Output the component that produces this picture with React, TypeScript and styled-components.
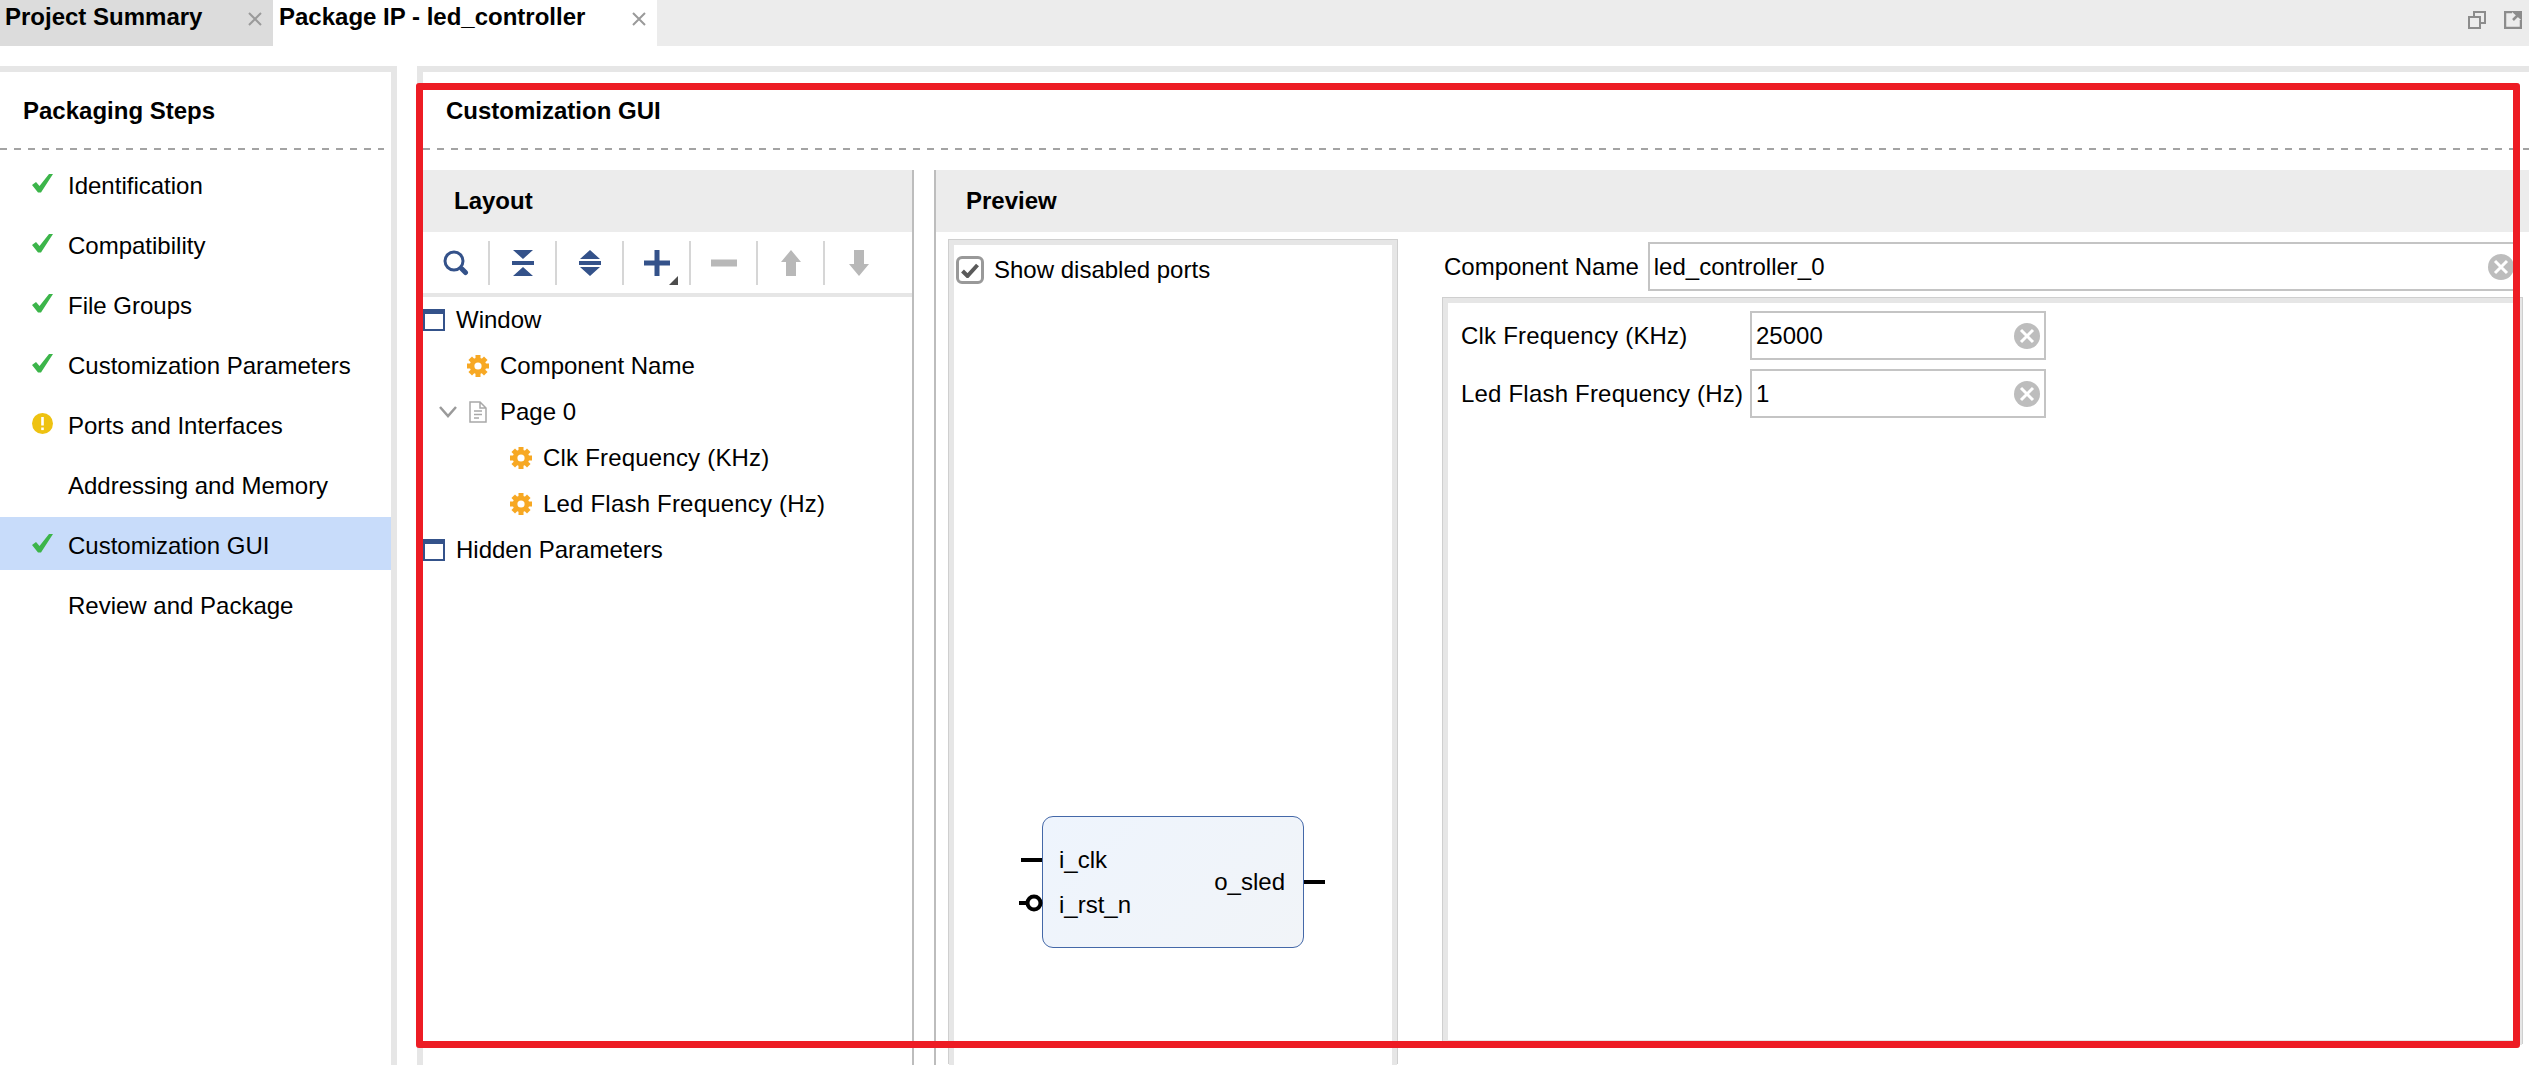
import * as React from 'react';
import styled, { createGlobalStyle } from 'styled-components';

const BLUE = '#34528a';
const MUTED = '#b8b8b8';
const PANEL_EDGE = '#e6e6e6';

const GlobalStyle = createGlobalStyle`
    html, body {
        margin: 0;
        padding: 0;
        background: #fff;
    }
    body {
        font-family: "Liberation Sans", Arial, sans-serif;
        color: #000;
    }
`;

type StepState = 'done' | 'warn' | 'none';

const steps: { label: string; state: StepState; selected?: boolean }[] = [
    { label: 'Identification', state: 'done' },
    { label: 'Compatibility', state: 'done' },
    { label: 'File Groups', state: 'done' },
    { label: 'Customization Parameters', state: 'done' },
    { label: 'Ports and Interfaces', state: 'warn' },
    { label: 'Addressing and Memory', state: 'none' },
    { label: 'Customization GUI', state: 'done', selected: true },
    { label: 'Review and Package', state: 'none' },
];

const Close = () => (
    <svg width="14" height="14" viewBox="0 0 14 14">
        <path d="M1 1 L13 13 M13 1 L1 13" stroke="#9a9a9a" strokeWidth="2" fill="none" />
    </svg>
);

const Check = () => (
    <svg width="21" height="19" viewBox="0 0 21 19">
        <path d="M0 11 L4 8 L7.500 12 L17 0 H21 L9 18.500 H6 Z" fill="#3cb54a" />
    </svg>
);

const Warn = () => (
    <svg width="21" height="21" viewBox="0 0 21 21">
        <circle cx="10.500" cy="10.500" r="10.500" fill="#eec211" />
        <rect x="9.200" y="4" width="2.600" height="8.500" fill="#fff" />
        <rect x="9.200" y="14.500" width="2.600" height="2.600" fill="#fff" />
    </svg>
);

const Gear = () => (
    <svg width="22" height="22" viewBox="0 0 22 22">
        <g fill="#f7a823">
            {[0, 45, 90, 135].map(angle => (
                <rect key={angle} x="8.500" y="0" width="5" height="22" transform={`rotate(${angle} 11 11)`} />
            ))}
            <circle cx="11" cy="11" r="8.300" />
        </g>
        <circle cx="11" cy="11" r="3.600" fill="#fff" />
    </svg>
);

const WindowIcon = () => (
    <svg width="22" height="22" viewBox="0 0 22 22">
        <rect x="1" y="1" width="20" height="20" fill="#fff" stroke={BLUE} strokeWidth="2" />
        <rect x="0" y="0" width="22" height="5" fill={BLUE} />
    </svg>
);

const DocIcon = () => (
    <svg width="20" height="22" viewBox="0 0 20 22">
        <path d="M1 1 H11 L17 7 V21 H1 Z M11 1 V7 H17" fill="#fff" stroke="#a8a8a8" strokeWidth="1.500" />
        <path d="M5 10 H13 M5 13.500 H13 M5 17 H10" stroke="#a8a8a8" strokeWidth="1.500" />
    </svg>
);

const Chevron = () => (
    <svg width="19" height="12" viewBox="0 0 19 12">
        <path d="M1 1 L9 10 L17 1" fill="none" stroke="#9a9a9a" strokeWidth="2.500" />
    </svg>
);

const ClearIcon = () => (
    <svg width="26" height="26" viewBox="0 0 26 26">
        <circle cx="13" cy="13" r="13" fill="#bdbdbd" />
        <path d="M7 7 L19 19 M19 7 L7 19" stroke="#fff" strokeWidth="3" />
    </svg>
);

const tools: { key: string; node: React.ReactNode }[] = [
    {
        key: 'search',
        node: (
            <svg width="26" height="26" viewBox="0 0 26 26">
                <circle cx="11" cy="11" r="9" fill="none" stroke={BLUE} strokeWidth="3" />
                <path d="M19 19 L22.500 22.500" stroke={BLUE} strokeWidth="5" strokeLinecap="round" />
            </svg>
        ),
    },
    {
        key: 'collapse',
        node: (
            <svg width="22" height="26" viewBox="0 0 22 26">
                <path d="M1 0 H21 L11 9 Z M1 26 H21 L11 17 Z" fill={BLUE} />
                <rect x="0" y="11" width="22" height="4" fill={BLUE} />
            </svg>
        ),
    },
    {
        key: 'expand',
        node: (
            <svg width="22" height="26" viewBox="0 0 22 26">
                <path d="M1 9 H21 L11 0 Z M1 17 H21 L11 26 Z" fill={BLUE} />
                <rect x="0" y="11" width="22" height="4" fill={BLUE} />
            </svg>
        ),
    },
    {
        key: 'add',
        node: (
            <svg width="26" height="26" viewBox="0 0 26 26">
                <path d="M10.500 0 H15.500 V10.500 H26 V15.500 H15.500 V26 H10.500 V15.500 H0 V10.500 H10.500 Z" fill={BLUE} />
            </svg>
        ),
    },
    {
        key: 'remove',
        node: (
            <svg width="26" height="26" viewBox="0 0 26 26">
                <rect x="0" y="9.500" width="26" height="7" fill={MUTED} />
            </svg>
        ),
    },
    {
        key: 'up',
        node: (
            <svg width="20" height="26" viewBox="0 0 20 26">
                <path d="M10 0 L20 12 H15 V26 H5 V12 H0 Z" fill={MUTED} />
            </svg>
        ),
    },
    {
        key: 'down',
        node: (
            <svg width="20" height="26" viewBox="0 0 20 26">
                <path d="M10 26 L20 14 H15 V0 H5 V14 H0 Z" fill={MUTED} />
            </svg>
        ),
    },
];

const App = () => (
    <Page>
        <GlobalStyle />
        <TabBar>
            <Tab>
                <TabTitle>Project Summary</TabTitle>
                <Close />
            </Tab>
            <Tab $active>
                <TabTitle>Package IP - led_controller</TabTitle>
                <Close />
            </Tab>
            <TabActions>
                <svg width="18" height="18" viewBox="0 0 18 18">
                    <path d="M6 6 V1 H17 V12 H12 M1 6 H12 V17 H1 Z" fill="none" stroke="#8c8c8c" strokeWidth="2" />
                </svg>
                <svg width="18" height="18" viewBox="0 0 18 18">
                    <path d="M8 1 H1 V17 H17 V9" fill="none" stroke="#8c8c8c" strokeWidth="2.500" />
                    <path d="M9 9 L14 4 M10 1 H18 V8 Z" stroke="#8c8c8c" strokeWidth="2.500" fill="#8c8c8c" />
                </svg>
            </TabActions>
        </TabBar>

        <Main>
            <StepsPanel>
                <PanelTitle>Packaging Steps</PanelTitle>
                <StepsDivider />
                <StepList>
                    {steps.map(step => (
                        <Step key={step.label} $selected={step.selected}>
                            <StepIcon>
                                {step.state === 'done' && <Check />}
                                {step.state === 'warn' && <Warn />}
                            </StepIcon>
                            <StepLabel>{step.label}</StepLabel>
                        </Step>
                    ))}
                </StepList>
            </StepsPanel>

            <Workspace>
                <PanelTitle>Customization GUI</PanelTitle>
                <Divider />
                <Columns>
                    <LayoutColumn>
                        <ColumnHeader>Layout</ColumnHeader>
                        <Toolbar>
                            {tools.map(tool => (
                                <ToolButton key={tool.key} $menu={tool.key === 'add'}>
                                    {tool.node}
                                </ToolButton>
                            ))}
                        </Toolbar>
                        <Tree>
                            <TreeRow $indent={0}>
                                <WindowIcon />
                                Window
                            </TreeRow>
                            <TreeRow $indent={44}>
                                <Gear />
                                Component Name
                            </TreeRow>
                            <TreeRow $indent={16}>
                                <Chevron />
                                <DocIcon />
                                Page 0
                            </TreeRow>
                            <TreeRow $indent={87}>
                                <Gear />
                                <FrequencyText>Clk Frequency (KHz)</FrequencyText>
                            </TreeRow>
                            <TreeRow $indent={87}>
                                <Gear />
                                <FrequencyText>Led Flash Frequency (Hz)</FrequencyText>
                            </TreeRow>
                            <TreeRow $indent={0}>
                                <WindowIcon />
                                Hidden Parameters
                            </TreeRow>
                        </Tree>
                    </LayoutColumn>

                    <PreviewColumn>
                        <PreviewHeader>Preview</PreviewHeader>
                        <PreviewBody>
                            <SymbolPanel>
                                <DisabledToggle>
                                    <CheckBox>
                                        <svg width="18" height="15" viewBox="0 0 18 15">
                                            <path d="M1.500 8 L6.500 13 L16.500 2" fill="none" stroke="#5a5a5a" strokeWidth="4" />
                                        </svg>
                                    </CheckBox>
                                    Show disabled ports
                                </DisabledToggle>
                                <SymbolBlock>
                                    <Pin $side="left" $top={41} />
                                    <InvertedPin width="24" height="20" viewBox="0 0 24 20">
                                        <path d="M0 10 H8" stroke="#000" strokeWidth="4" />
                                        <circle cx="15" cy="10" r="6.500" fill="#fff" stroke="#000" strokeWidth="4" />
                                    </InvertedPin>
                                    <Pin $side="right" $top={63} />
                                    <PortColumn>
                                        <span>i_clk</span>
                                        <span>i_rst_n</span>
                                    </PortColumn>
                                    <span>o_sled</span>
                                </SymbolBlock>
                            </SymbolPanel>

                            <ParamsArea>
                                <NameRow>
                                    Component Name
                                    <TextBox $wide>
                                        led_controller_0
                                        <ClearIcon />
                                    </TextBox>
                                </NameRow>
                                <ParamsPanel>
                                    <ParamRow>
                                        <ParamLabel>Clk Frequency (KHz)</ParamLabel>
                                        <TextBox>
                                            25000
                                            <ClearIcon />
                                        </TextBox>
                                    </ParamRow>
                                    <ParamRow>
                                        <ParamLabel>Led Flash Frequency (Hz)</ParamLabel>
                                        <TextBox>
                                            1
                                            <ClearIcon />
                                        </TextBox>
                                    </ParamRow>
                                </ParamsPanel>
                            </ParamsArea>
                        </PreviewBody>
                    </PreviewColumn>
                </Columns>
            </Workspace>
        </Main>
        <Callout />
    </Page>
);

export default App;

const Page = styled.div`
    position: relative;
    width: 2529px;
    height: 1065px;
    overflow: hidden;
    display: flex;
    flex-direction: column;
    font-size: 24px;
`;

const TabBar = styled.div`
    display: flex;
    height: 46px;
    background: #ececec;
`;

const Tab = styled.div<{ $active?: boolean }>`
    display: flex;
    justify-content: space-between;
    width: ${p => (p.$active ? 384 : 273)}px;
    padding: 4px 11px 0 ${p => (p.$active ? 6 : 5)}px;
    box-sizing: border-box;
    background: ${p => (p.$active ? '#fff' : '#dcdcdc')};

    svg {
        margin-top: 8px;
    }
`;

const TabTitle = styled.span`
    font-weight: 700;
    line-height: 26px;
`;

const TabActions = styled.div`
    display: flex;
    gap: 18px;
    margin-left: auto;
    padding: 11px 7px 0 0;
    align-items: flex-start;
`;

const Main = styled.div`
    flex: 1;
    display: flex;
    gap: 20px;
    margin-top: 20px;
    min-height: 0;
`;

const StepsPanel = styled.div`
    width: 397px;
    box-sizing: border-box;
    border-top: 6px solid ${PANEL_EDGE};
    border-right: 6px solid ${PANEL_EDGE};
`;

const PanelTitle = styled.div`
    height: 76px;
    padding: 26px 0 0 23px;
    box-sizing: border-box;
    font-weight: 700;
    line-height: 26px;
`;

const Divider = styled.div`
    height: 2px;
    background: repeating-linear-gradient(90deg, #a3a3a3 0 7px, transparent 7px 14px);
`;

const StepsDivider = styled(Divider)`
    margin-right: 7px;
`;

const StepList = styled.div`
    padding-top: 7px;
`;

const Step = styled.div<{ $selected?: boolean }>`
    display: flex;
    align-items: center;
    height: 53px;
    margin-bottom: 7px;
    padding-left: 32px;
    background: ${p => (p.$selected ? '#c8dcfa' : 'transparent')};
`;

const StepIcon = styled.span`
    display: flex;
    align-items: center;
    justify-content: center;
    width: 21px;
    height: 25px;
    margin-right: 15px;
`;

const StepLabel = styled.span`
    margin-top: 4px;
`;

const Workspace = styled.div`
    flex: 1;
    min-width: 0;
    display: flex;
    flex-direction: column;
    border-top: 6px solid ${PANEL_EDGE};
    border-left: 6px solid ${PANEL_EDGE};
`;

const Columns = styled.div`
    flex: 1;
    display: flex;
    gap: 20px;
    margin-top: 20px;
    min-height: 0;
`;

const LayoutColumn = styled.div`
    width: 491px;
    box-sizing: border-box;
    border-right: 2px solid #bdbdbd;
`;

const ColumnHeader = styled.div`
    height: 62px;
    padding-left: 31px;
    display: flex;
    align-items: center;
    background: #ececec;
    font-weight: 700;
`;

const PreviewHeader = styled(ColumnHeader)`
    padding-left: 30px;
`;

const Toolbar = styled.div`
    display: flex;
    align-items: center;
    height: 61px;
    border-bottom: 4px solid ${PANEL_EDGE};
`;

const ToolButton = styled.div<{ $menu?: boolean }>`
    position: relative;
    display: flex;
    align-items: center;
    justify-content: center;
    width: 67px;
    height: 44px;
    box-sizing: border-box;
    border-right: 2px solid #d6d6d6;

    &:last-child {
        border-right: none;
    }

    ${p =>
        p.$menu &&
        `&::after {
            content: '';
            position: absolute;
            right: 11px;
            bottom: 0;
            border-style: solid;
            border-width: 0 0 9px 9px;
            border-color: transparent transparent #4d4d4d transparent;
        }`}
`;

const Tree = styled.div``;

const TreeRow = styled.div<{ $indent: number }>`
    display: flex;
    align-items: center;
    gap: 11px;
    height: 46px;
    padding-left: ${p => p.$indent}px;
`;

const FrequencyText = styled.span`
    letter-spacing: 0.2px;
`;

const PreviewColumn = styled.div`
    flex: 1;
    min-width: 0;
    box-sizing: border-box;
    border-left: 2px solid #bdbdbd;
    display: flex;
    flex-direction: column;
`;

const PreviewBody = styled.div`
    flex: 1;
    min-height: 0;
    display: flex;
    padding: 8px 0 0 13px;
`;

const SymbolPanel = styled.div`
    width: 448px;
    box-sizing: border-box;
    display: flex;
    flex-direction: column;
    border: 5px solid ${PANEL_EDGE};
    border-bottom: none;
    box-shadow: -1px -1px 0 #cfcfcf, 1px -1px 0 #cfcfcf;
    padding: 11px 0 117px 2px;
`;

const DisabledToggle = styled.div`
    display: flex;
    align-items: center;
    gap: 10px;
    line-height: 28px;
`;

const CheckBox = styled.span`
    display: flex;
    align-items: center;
    justify-content: center;
    width: 28px;
    height: 28px;
    box-sizing: border-box;
    border: 3px solid #999;
    border-radius: 6px;
`;

const SymbolBlock = styled.div`
    position: relative;
    display: flex;
    justify-content: space-between;
    align-items: center;
    width: 262px;
    height: 132px;
    margin: auto 0 0 86px;
    padding: 0 18px 0 16px;
    box-sizing: border-box;
    border: 1.5px solid #4468a8;
    border-radius: 11px;
    background: linear-gradient(135deg, #eef4fd, #f1f4f8);
`;

const PortColumn = styled.div`
    display: flex;
    flex-direction: column;
    gap: 17px;
`;

const Pin = styled.span<{ $side: 'left' | 'right'; $top: number }>`
    position: absolute;
    top: ${p => p.$top}px;
    ${p => p.$side}: -22px;
    width: 21px;
    height: 4px;
    background: #000;
`;

const InvertedPin = styled.svg`
    position: absolute;
    top: 76px;
    left: -24px;
`;

const ParamsArea = styled.div`
    flex: 1;
    min-width: 0;
    display: flex;
    flex-direction: column;
    margin-left: 46px;
    margin-right: 7px;
`;

const NameRow = styled.div`
    display: flex;
    align-items: center;
    gap: 9px;
    height: 49px;
    margin: 2px 2px 7px 1px;
`;

const TextBox = styled.div<{ $wide?: boolean }>`
    display: flex;
    align-items: center;
    justify-content: space-between;
    flex: ${p => (p.$wide ? 1 : '0 0 296px')};
    height: 49px;
    padding: 0 4px;
    box-sizing: border-box;
    border: 2px solid #c4c4c4;
`;

const ParamsPanel = styled.div`
    flex: 1;
    min-height: 0;
    padding: 8px 0 0 13px;
    margin-bottom: 20px;
    border: 5px solid ${PANEL_EDGE};
    box-shadow: -1px -1px 0 #cfcfcf, 1px -1px 0 #cfcfcf;
`;

const ParamRow = styled.div`
    display: flex;
    align-items: center;
    height: 49px;
    margin-bottom: 9px;
`;

const ParamLabel = styled(FrequencyText)`
    flex: 0 0 289px;
`;

const Callout = styled.div`
    position: absolute;
    left: 416px;
    top: 83px;
    width: 2104px;
    height: 965px;
    box-sizing: border-box;
    border: 7px solid #ed1c24;
    border-radius: 3px;
    pointer-events: none;
`;
